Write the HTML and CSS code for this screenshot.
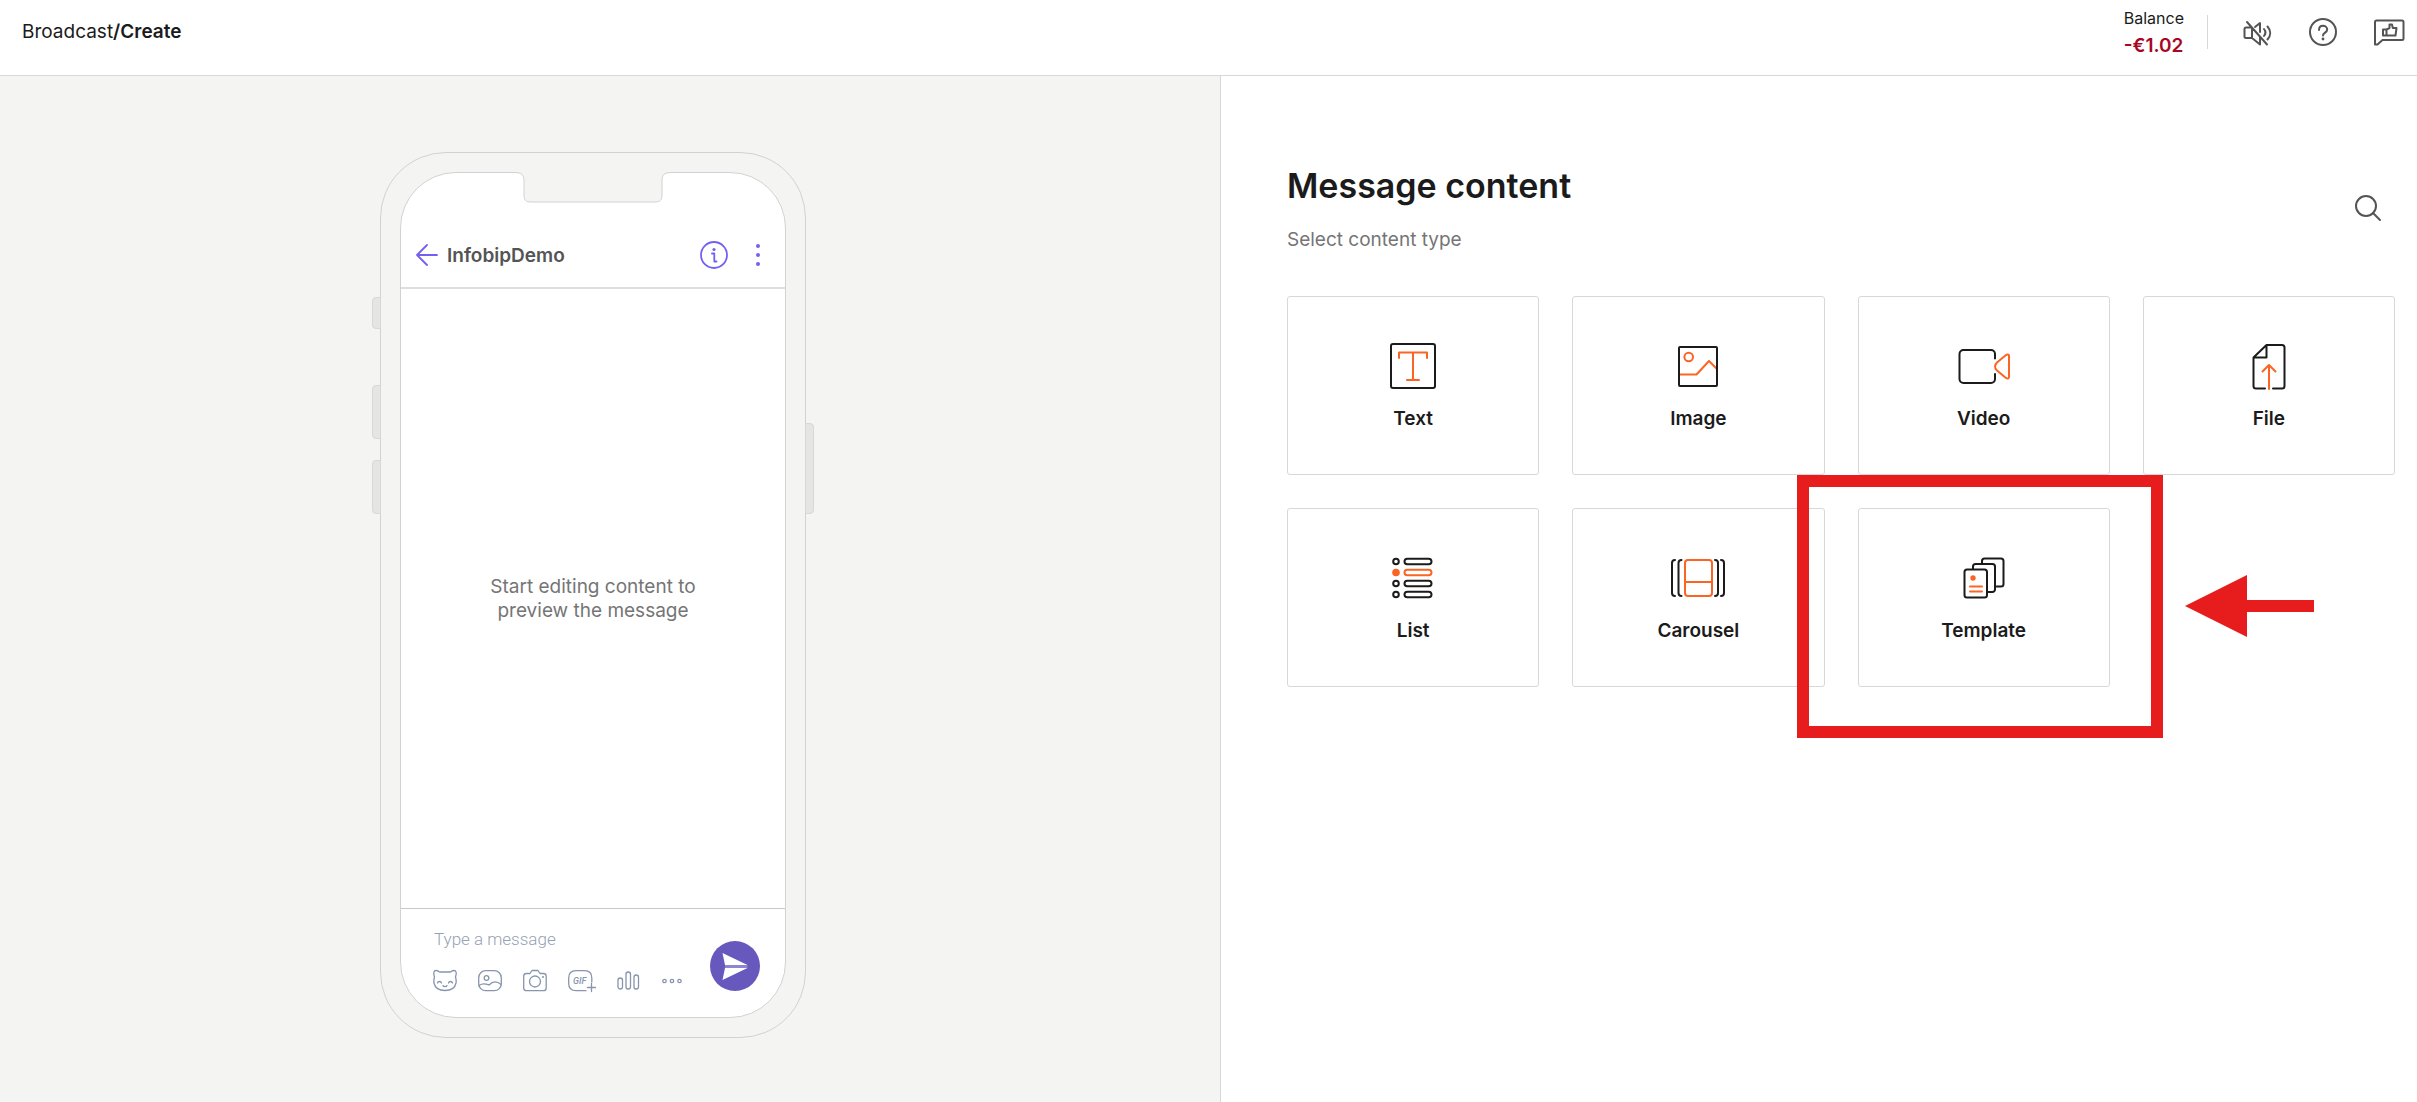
FILE: index.html
```html
<!DOCTYPE html>
<html lang="en">
<head>
  <meta charset="UTF-8" />
  <meta name="viewport" content="width=device-width, initial-scale=1.0"/>
  <title>Broadcast / Create</title>
  <link rel="stylesheet" href="styles.css">
</head>
<body>
  <!-- Top bar -->
  <header class="topbar">
    <nav class="breadcrumb"><a href="#">Broadcast</a><strong>/Create</strong></nav>
    <div class="topbar-right">
      <div class="balance">
        <span class="balance-label">Balance</span>
        <span class="balance-value">-€1.02</span>
      </div>
      <div class="topbar-icons">
        <button class="icon-btn" aria-label="Sound off">
          <svg width="32" height="32" viewBox="0 0 32 32">
            <path d="M9.500 11.500H5a1.500 1.500 0 0 0-1.500 1.500v7.500A1.500 1.500 0 0 0 5 22H11V13M11 22l8 6.500V21M14 11l5-4v9M6 6l20 22.500M23 13c1.600 2 1.600 5 0 7M26.500 10.500c3.600 4 3.600 9 0 13" />
          </svg>
        </button>
        <button class="icon-btn" aria-label="Help">
          <svg width="32" height="32" viewBox="0 0 32 32">
            <circle cx="16" cy="16" r="13" />
            <path d="M12 14c0-2.600 1.600-4.200 4-4.200s4.200 1.600 4.200 3.800c0 3.200-4.200 2.800-4.200 6" />
            <circle class="dot" cx="16" cy="23" r="1.400" />
          </svg>
        </button>
        <button class="icon-btn" aria-label="Feedback">
          <svg width="32" height="32" viewBox="0 0 32 32">
            <path d="M3.500 4.500H29a1.500 1.500 0 0 1 1.500 1.500V22.500a1.500 1.500 0 0 1-1.500 1.500H9.500L4.500 28.500H2V6a1.500 1.500 0 0 1 1.500-1.500z" />
            <path d="M10 13.500h3.500V19.500H10zM13.500 13.500l3-1.500V8.500h2.500l.8 3.500h3.700l-1 7.500h-9" />
          </svg>
        </button>
      </div>
    </div>
  </header>

  <main class="layout">
    <!-- Phone preview -->
    <section class="preview">
      <div class="phone">
        <span class="side-btn side-mute"></span>
        <span class="side-btn side-up"></span>
        <span class="side-btn side-down"></span>
        <span class="side-btn side-power"></span>

        <div class="screen">
          <svg class="notch" width="154" height="31" viewBox="0 0 154 31">
            <path d="M0 0V1.500c5 0 8 2 8 7V23c0 5 2 7 7 7H139c5 0 7-2 7-7V8.500c0-5 3-7 8-7V0z" />
            <path class="notch-line" d="M0 .5c5 0 8 2 8 8V23c0 5 2 7 7 7H139c5 0 7-2 7-7V8.500c0-6 3-8 8-8" />
          </svg>

          <div class="chat-header">
            <button class="chat-btn" aria-label="Back">
              <svg width="24" height="28" viewBox="0 0 24 28"><path d="M22 14H2M12 4L2 14l10 10" /></svg>
            </button>
            <span class="chat-name">InfobipDemo</span>
            <button class="chat-btn" aria-label="Info">
              <svg width="28" height="28" viewBox="0 0 28 28">
                <circle cx="14" cy="14" r="13" />
                <circle class="dot" cx="14" cy="8.500" r="1.600" />
                <path d="M12 12.500h2.300V20.500H16.500" />
              </svg>
            </button>
            <button class="chat-btn" aria-label="More">
              <svg width="28" height="28" viewBox="0 0 28 28">
                <circle class="dot" cx="14" cy="5" r="2" />
                <circle class="dot" cx="14" cy="14" r="2" />
                <circle class="dot" cx="14" cy="23" r="2" />
              </svg>
            </button>
          </div>

          <div class="chat-body">
            <p>Start editing content to<br>preview the message</p>
          </div>

          <div class="composer">
            <div class="composer-main">
              <input class="composer-input" type="text" placeholder="Type a message" aria-label="Type a message">
              <div class="composer-tools">
                <svg width="24" height="24" viewBox="0 0 24 24">
                  <path d="M1.500 8C0 3.500 1 1.500 3 1.500c1.600 0 2.500.8 3.500 1.500h11c1-.7 1.900-1.500 3.500-1.500 2 0 3 2 1.500 6.500.6 2 .9 4 .5 6-1 5-5 7.500-11 7.500S2 19 1 14c-.4-2-.1-4 .5-6z" />
                  <path d="M4.500 14c.6-2 3.400-2 4 0M15.500 14c.6-2 3.400-2 4 0M10 16.500c.6 1.500 3.400 1.500 4 0" />
                </svg>
                <svg width="24" height="24" viewBox="0 0 24 24">
                  <rect x=".7" y="1.700" width="22.600" height="20" rx="7" />
                  <circle cx="8.500" cy="9" r="2.300" />
                  <path d="M1 16.500c4-3 7-1.500 10-.5 4-4 8-4 12-.5" />
                </svg>
                <svg width="24" height="24" viewBox="0 0 24 24">
                  <path d="M3.500 4.500H7l2-3h6l2 3h3.500c1.800 0 2.700 1 2.700 2.700V19c0 1.800-1 2.700-2.700 2.700h-17C1.700 21.700.7 20.800.7 19V7.200c0-1.700 1-2.700 2.800-2.700z" />
                  <circle cx="12" cy="12.500" r="5.500" />
                  <circle class="dot" cx="20" cy="8" r="1" />
                </svg>
                <svg width="28" height="24" viewBox="0 0 28 24">
                  <path d="M18 21.700H8C3 21.700.7 19 .7 14.500V9C.7 4 3 1.700 8 1.700H16.500c5 0 7.300 2.300 7.300 7.300v4M23.500 14.500v8M19.500 18.500h8" />
                  <text x="5" y="15">GIF</text>
                </svg>
                <svg width="24" height="24" viewBox="0 0 24 24">
                  <rect x="1" y="9" width="4.500" height="11" rx="2.200" />
                  <rect x="9" y="3" width="4.500" height="17" rx="2.200" />
                  <rect x="17" y="6" width="4.500" height="14" rx="2.200" />
                </svg>
                <svg width="24" height="24" viewBox="0 0 24 24">
                  <circle cx="2.500" cy="12" r="1.700" />
                  <circle cx="10" cy="12" r="1.700" />
                  <circle cx="17.500" cy="12" r="1.700" />
                </svg>
              </div>
            </div>
            <button class="send-btn" aria-label="Send">
              <svg width="50" height="50" viewBox="0 0 50 50">
                <path d="M12.500 12L37.500 24H15zM12.500 39L37.500 27H15z" />
                <path class="send-mid" d="M15 24h22.500v3H15z" />
              </svg>
            </button>
          </div>
        </div>
      </div>
    </section>

    <!-- Content type picker -->
    <section class="content">
      <div class="content-head">
        <div>
          <h1>Message content</h1>
          <p>Select content type</p>
        </div>
        <button class="icon-btn" aria-label="Search">
          <svg width="32" height="32" viewBox="0 0 32 32">
            <circle cx="14" cy="15" r="10" />
            <path d="M21 22l7 7" />
          </svg>
        </button>
      </div>

      <div class="types">
        <button class="type-card">
          <svg width="56" height="56" viewBox="0 0 56 56">
            <rect x="6" y="6" width="44" height="44" rx="2" />
            <path class="accent" d="M14 20v-5.500h28V20M28 14.500V42M22 42h12" />
          </svg>
          <span>Text</span>
        </button>
        <button class="type-card">
          <svg width="56" height="56" viewBox="0 0 56 56">
            <path class="accent" d="M9 36.500h17.500L39 23l8 8" />
            <circle class="accent" cx="18.700" cy="19" r="4.300" />
            <rect x="9" y="9" width="38" height="39" rx="1" />
          </svg>
          <span>Image</span>
        </button>
        <button class="type-card">
          <svg width="56" height="56" viewBox="0 0 56 56">
            <path d="M39 20.500V16a4 4 0 0 0-4-4H7.500a4 4 0 0 0-4 4v25a4 4 0 0 0 4 4H35a4 4 0 0 0 4-4v-5" />
            <path class="accent" d="M50 17L41 24.500c-2.500 2.500-2.500 5.500 0 8L50 40c1.500 1 3 .5 3-1V18c0-1.500-1.500-2-3-1z" />
          </svg>
          <span>Video</span>
        </button>
        <button class="type-card">
          <svg width="56" height="56" viewBox="0 0 56 56">
            <path d="M24 50.500H15a2.500 2.500 0 0 1-2.500-2.500V19.500L25.500 7H41a2.500 2.500 0 0 1 2.500 2.500V48a2.500 2.500 0 0 1-2.500 2.500H32M25.500 7v12.500h-13" />
            <path class="accent" d="M28 51V27M21.500 33.500L28 27l6.500 6.500" />
          </svg>
          <span>File</span>
        </button>
        <button class="type-card">
          <svg width="56" height="56" viewBox="0 0 56 56">
            <circle cx="11" cy="11.500" r="2.800" />
            <rect x="19.500" y="8.700" width="27" height="5.600" rx="2.800" />
            <circle class="accent-dot" cx="11" cy="22.500" r="3.800" />
            <rect class="accent" x="19.500" y="19.700" width="27" height="5.600" rx="2.800" />
            <circle cx="11" cy="33.500" r="2.800" />
            <rect x="19.500" y="30.700" width="27" height="5.600" rx="2.800" />
            <circle cx="11" cy="44.500" r="2.800" />
            <rect x="19.500" y="41.700" width="27" height="5.600" rx="2.800" />
          </svg>
          <span>List</span>
        </button>
        <button class="type-card">
          <svg width="56" height="56" viewBox="0 0 56 56">
            <path d="M5 10c-2 0-3 1-3 3v30c0 2 1 3 3 3M11.500 10c-2 0-3 1-3 3v30c0 2 1 3 3 3M45 10c2 0 3 1 3 3v30c0 2-1 3-3 3M51 10c2 0 3 1 3 3v30c0 2-1 3-3 3" />
            <rect class="accent" x="15" y="10" width="27" height="36" rx="3" />
            <path class="accent" d="M15 32h27" />
          </svg>
          <span>Carousel</span>
        </button>
        <div class="type-slot">
          <button class="type-card">
            <svg width="56" height="56" viewBox="0 0 56 56">
              <path d="M26 13.500V11a2.500 2.500 0 0 1 2.500-2.500H45a2.500 2.500 0 0 1 2.500 2.500v23a2.500 2.500 0 0 1-2.500 2.500H40.500" />
              <path d="M17 19v-2.500a2.500 2.500 0 0 1 2.500-2.500H36.500A2.500 2.500 0 0 1 39 16.500v23a2.500 2.500 0 0 1-2.500 2.500H32" />
              <rect x="8.500" y="19.500" width="22.500" height="28" rx="2.500" />
              <circle class="accent-dot" cx="17" cy="28" r="2.700" />
              <path class="accent" d="M14 36.500h12M14 41.500h12" />
            </svg>
            <span>Template</span>
          </button>
          <!-- Callout over the template card -->
          <span class="highlight"></span>
          <svg class="arrow" width="130" height="64" viewBox="0 0 130 64">
            <path d="M0 32L62 1v25h67v12H62v25z" />
          </svg>
        </div>
      </div>
    </section>
  </main>
</body>
</html>
```

FILE: styles.css
```css
* {
  box-sizing: border-box;
}

body {
  margin: 0;
  min-height: 100vh;
  display: flex;
  flex-direction: column;
  overflow-x: hidden;
  font-family: Inter, sans-serif;
  font-size: 19px;
  color: #1b1b1b;
  background: #fff;
}

button {
  padding: 0;
  border: none;
  background: none;
  font: inherit;
  color: inherit;
  cursor: pointer;
}

svg {
  display: block;
  fill: none;
  stroke-linecap: round;
  stroke-linejoin: round;
}

/* Top bar */
.topbar {
  display: flex;
  justify-content: space-between;
  align-items: center;
  height: 76px;
  padding: 0 12px 12px 22px;
  border-bottom: 1px solid #d8d8d8;
}

.breadcrumb a {
  color: inherit;
  text-decoration: none;
}

.breadcrumb strong {
  font-weight: 600;
}

.topbar-right {
  display: flex;
  align-items: center;
}

.balance {
  display: flex;
  flex-direction: column;
  padding-right: 23px;
  line-height: 28px;
}

.balance-label {
  font-size: 16px;
}

.balance-value {
  font-weight: 600;
  color: #a8071f;
}

.topbar-icons {
  display: flex;
  align-items: center;
  gap: 34px;
  height: 34px;
  padding-left: 33px;
  border-left: 1px solid #d8d8d8;
}

.icon-btn svg {
  stroke: #545454;
  stroke-width: 2;
}

.icon-btn .dot {
  fill: #545454;
  stroke: none;
}

/* Layout */
.layout {
  flex: 1;
  display: grid;
  grid-template-columns: 1220fr 1197fr;
}

.preview {
  display: flex;
  justify-content: center;
  align-items: flex-start;
  padding: 76px 34px 60px 0;
  background: #f4f4f2;
}

/* Phone */
.phone {
  position: relative;
  display: flex;
  width: 426px;
  height: 886px;
  padding: 19px;
  border: 1px solid #d2d2d2;
  border-radius: 66px;
}

.side-btn {
  position: absolute;
  width: 9px;
  background: #e5e5e4;
  border: 1px solid #d8d8d8;
}

.side-mute,
.side-up,
.side-down {
  left: -9px;
  border-radius: 4px 0 0 4px;
}

.side-mute {
  top: 144px;
  height: 32px;
}

.side-up {
  top: 232px;
  height: 54px;
}

.side-down {
  top: 307px;
  height: 54px;
}

.side-power {
  top: 270px;
  right: -9px;
  height: 91px;
  border-radius: 0 4px 4px 0;
}

.screen {
  position: relative;
  flex: 1;
  display: flex;
  flex-direction: column;
  background: #fff;
  border: 1px solid #d2d2d2;
  border-radius: 56px;
}

.notch {
  position: absolute;
  top: -1px;
  left: 50%;
  margin-left: -77px;
  fill: #f4f4f2;
}

.notch-line {
  stroke: #d2d2d2;
}

.chat-header {
  display: flex;
  align-items: center;
  gap: 16px;
  height: 116px;
  padding: 50px 13px 0 14px;
  border-bottom: 2px solid #dedede;
}

.chat-btn svg {
  stroke: #7360f2;
  stroke-width: 1.8;
}

.chat-btn .dot {
  fill: #7360f2;
  stroke: none;
}

.chat-name {
  flex: 1;
  margin-left: -8px;
  font-weight: 600;
  color: #545454;
}

.chat-body {
  flex: 1;
  display: flex;
  justify-content: center;
  align-items: center;
}

.chat-body p {
  margin: 0;
  line-height: 24px;
  text-align: center;
  color: #757575;
}

.composer {
  display: flex;
  justify-content: space-between;
  align-items: flex-start;
  height: 109px;
  padding: 16px 25px 0 32px;
  border-top: 1px solid #c8c8c8;
}

.composer-input {
  width: 240px;
  height: 28px;
  padding: 0 1px;
  border: none;
  outline: none;
  font: 300 17px Roboto, sans-serif;
  background: none;
}

.composer-input::placeholder {
  color: #95a1b5;
  opacity: 1;
}

.composer-tools {
  display: flex;
  gap: 21px;
  margin-top: 16px;
}

.composer-tools svg {
  stroke: #8795ad;
  stroke-width: 1.3;
}

.composer-tools text {
  fill: #8795ad;
  stroke: none;
  font: italic 500 9px Roboto, sans-serif;
}

.composer-tools .dot {
  fill: #8795ad;
  stroke: none;
}

.send-btn {
  width: 50px;
  height: 50px;
  margin-top: 16px;
  border-radius: 50%;
  background: #6658bd;
}

.send-btn svg {
  fill: #fff;
}

.send-btn .send-mid {
  fill: #8f84d0;
}

/* Content picker */
.content {
  padding: 84px 22px 60px 66px;
  border-left: 1px solid #d8d8d8;
}

.content-head {
  display: flex;
  justify-content: space-between;
  align-items: center;
  padding-right: 11px;
  margin-bottom: 42px;
}

.content-head h1 {
  margin: 0;
  font-size: 34px;
  font-weight: 600;
  line-height: 52px;
}

.content-head p {
  margin: 14px 0 0;
  line-height: 28px;
  color: #757575;
}

.types {
  display: grid;
  grid-template-columns: repeat(4, 1fr);
  gap: 33px;
}

.type-card {
  display: flex;
  flex-direction: column;
  align-items: center;
  width: 100%;
  height: 179px;
  padding-top: 41px;
  border: 1px solid #d8d8d8;
  border-radius: 3px;
  font-weight: 600;
}

.type-card span {
  margin-top: 13px;
  line-height: 24px;
}

.type-card svg {
  stroke: #1b1b1b;
  stroke-width: 2;
}

.type-card .accent {
  stroke: #fc6423;
}

.type-card .accent-dot {
  fill: #fc6423;
  stroke: none;
}

.type-slot {
  position: relative;
}

/* Callout */
.highlight {
  position: absolute;
  top: -33px;
  right: -53px;
  bottom: -51px;
  left: -61px;
  border: 12px solid #e71d1d;
  pointer-events: none;
}

.arrow {
  position: absolute;
  top: 66px;
  left: 100%;
  margin-left: 75px;
  fill: #e71d1d;
  pointer-events: none;
}
```
